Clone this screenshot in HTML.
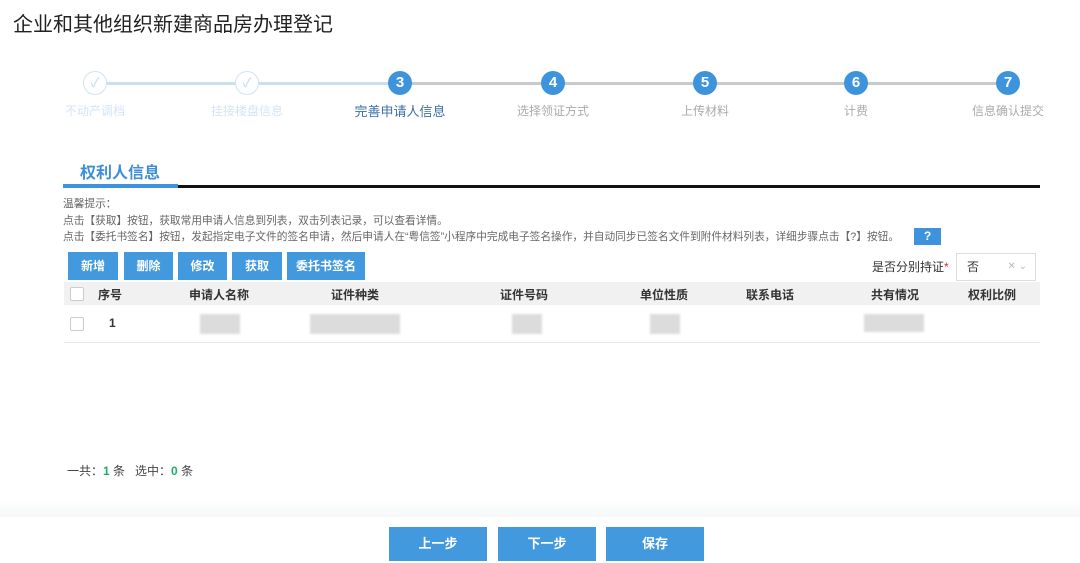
<!DOCTYPE html><html><head><meta charset="utf-8"><style>
*{margin:0;padding:0;box-sizing:border-box}
body{width:1080px;height:563px;background:#fff;font-family:"Liberation Sans","Noto Sans CJK SC",sans-serif;position:relative;overflow:hidden;color:#333}
.a{position:absolute}
.c{position:absolute;width:24px;height:24px;border-radius:50%;top:71px;text-align:center;line-height:24px;font-weight:bold;font-size:15px;color:#fff;background:#3d93dc}
.c.d{background:#fff;border:1.5px solid #cfe3f5;color:#cfe3f5;font-size:13px;line-height:21px}
.lab{position:absolute;top:102px;font-size:12px;color:#aaa;width:120px;text-align:center;margin-left:-60px}
.btn{position:absolute;top:252px;height:28px;background:#4399de;color:#fff;font-size:12px;font-weight:bold;text-align:center;line-height:28px}
.th{position:absolute;top:286px;font-size:12px;font-weight:bold;color:#333;transform:translateX(-50%)}
.bl{position:absolute;background:#dcdcdc;filter:blur(1px)}
.fb{position:absolute;top:527px;height:34px;width:98px;background:#4399de;color:#fff;font-weight:bold;font-size:13px;text-align:center;line-height:34px}
.cb{position:absolute;width:14px;height:14px;border:1px solid #ccc;background:#fff;border-radius:2px}
</style></head><body>
<div class="a" style="left:13px;top:8px;font-size:20px;color:#222">企业和其他组织新建商品房办理登记</div>
<div class="a" style="left:95px;top:82px;width:305px;height:3px;background:#c9e0f3"></div>
<div class="a" style="left:400px;top:82px;width:608px;height:3px;background:#c8c9cc"></div>
<div class="c d" style="left:83px">✓</div>
<div class="c d" style="left:235px">✓</div>
<div class="c" style="left:388px">3</div>
<div class="c" style="left:541px">4</div>
<div class="c" style="left:693px">5</div>
<div class="c" style="left:844px">6</div>
<div class="c" style="left:996px">7</div>
<div class="lab" style="left:95px;color:#d3e5f5">不动产调档</div>
<div class="lab" style="left:247px;color:#d3e5f5">挂接楼盘信息</div>
<div class="lab" style="left:400px;color:#3a6fa8;font-size:13px;top:101px">完善申请人信息</div>
<div class="lab" style="left:553px">选择领证方式</div>
<div class="lab" style="left:705px">上传材料</div>
<div class="lab" style="left:856px">计费</div>
<div class="lab" style="left:1008px">信息确认提交</div>
<div class="a" style="left:80px;top:159px;font-size:16px;font-weight:bold;color:#3f8fd8">权利人信息</div>
<div class="a" style="left:63px;top:185px;width:977px;height:3px;background:#111"></div>
<div class="a" style="left:63px;top:184px;width:115px;height:4px;background:#3d93dc"></div>
<div class="a" style="left:63px;top:196px;font-size:10.7px;color:#666;line-height:16.5px;white-space:nowrap">温馨提示：<br>点击【获取】按钮，获取常用申请人信息到列表，双击列表记录，可以查看详情。<br>点击【委托书签名】按钮，发起指定电子文件的签名申请，然后申请人在“粤信签”小程序中完成电子签名操作，并自动同步已签名文件到附件材料列表，详细步骤点击【?】按钮。</div>
<div class="a" style="left:914px;top:228px;width:27px;height:17px;background:#3d93dc;color:#fff;font-weight:bold;font-size:12px;text-align:center;line-height:17px">?</div>
<div class="btn" style="left:68px;width:50px">新增</div>
<div class="btn" style="left:124px;width:49px">删除</div>
<div class="btn" style="left:178px;width:49px">修改</div>
<div class="btn" style="left:232px;width:50px">获取</div>
<div class="btn" style="left:287px;width:78px">委托书签名</div>
<div class="a" style="left:872px;top:258px;font-size:12px;color:#333">是否分别持证<span style="color:#e22">*</span></div>
<div class="a" style="left:956px;top:253px;width:80px;height:28px;border:1px solid #ddd;font-size:12px;line-height:26px;padding-left:10px">否<span style="position:absolute;right:8px;color:#bbb;font-size:10px">✕ ⌄</span></div>
<div class="a" style="left:64px;top:282px;width:976px;height:23px;background:#f1f1f1"></div>
<div class="cb" style="left:70px;top:287px"></div>
<div class="th" style="left:110px">序号</div><div class="th" style="left:219px">申请人名称</div><div class="th" style="left:355px">证件种类</div><div class="th" style="left:524px">证件号码</div><div class="th" style="left:664px">单位性质</div><div class="th" style="left:770px">联系电话</div><div class="th" style="left:895px">共有情况</div><div class="th" style="left:992px">权利比例</div>
<div class="a" style="left:64px;top:342px;width:976px;height:1px;background:#e8e8e8"></div>
<div class="cb" style="left:70px;top:317px"></div>
<div class="a" style="left:109px;top:316px;font-size:12px;font-weight:bold">1</div>
<div class="bl" style="left:200px;top:314px;width:40px;height:20px"></div>
<div class="bl" style="left:310px;top:314px;width:90px;height:20px"></div>
<div class="bl" style="left:512px;top:314px;width:30px;height:20px"></div>
<div class="bl" style="left:650px;top:314px;width:30px;height:20px"></div>
<div class="bl" style="left:864px;top:314px;width:60px;height:18px"></div>
<div class="a" style="left:67px;top:462px;font-size:12px;color:#444">一共：<b style="color:#1db064">1</b> 条&nbsp;&nbsp;&nbsp;选中：<b style="color:#1db064">0</b> 条</div>
<div class="a" style="left:0;top:500px;width:1080px;height:17px;background:linear-gradient(#fff,#f5f7f9)"></div>
<div class="fb" style="left:389px">上一步</div>
<div class="fb" style="left:498px">下一步</div>
<div class="fb" style="left:606px">保存</div>
</body></html>
